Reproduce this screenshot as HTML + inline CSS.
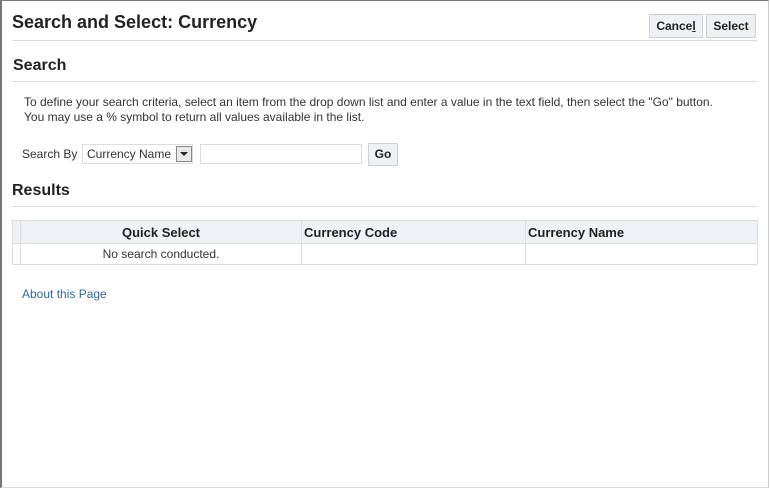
<!DOCTYPE html>
<html><head><style>
body{margin:0;width:770px;height:489px;position:relative;overflow:hidden;background:#fff;font-family:"Liberation Sans",Arial,sans-serif;color:#222}
.a{position:absolute}
.frame{left:0;top:0;width:766px;height:486px;border-top:1px solid #777;border-left:2px solid #777;border-right:1px solid #ccc;border-bottom:1px solid #ddd}
.hr{height:1px;background:#ddd;left:12px;width:746px}
.btn{top:14px;height:22px;background:#eef0f3;border:1px solid #ccd0d5;font-size:12px;font-weight:bold;line-height:22px;text-align:center;color:#222}
.t{font-size:12px;color:#333}
table{border-collapse:collapse;font-size:13px;table-layout:fixed}
td,th{border:1px solid #ddd;padding:0}
</style></head><body>
<div class="a frame"></div>
<div class="a" style="left:12px;top:12px;font-size:18px;font-weight:bold;color:#222">Search and Select: Currency</div>
<div class="a btn" style="left:649px;width:52px">Cance<u>l</u></div>
<div class="a btn" style="left:706px;width:48px">Select</div>
<div class="a hr" style="top:40px"></div>
<div class="a" style="left:13px;top:57px;font-size:16px;font-weight:bold">Search</div>
<div class="a hr" style="top:81px"></div>
<div class="a t" style="left:24px;top:95px;line-height:15px">To define your search criteria, select an item from the drop down list and enter a value in the text field, then select the "Go" button.<br>You may use a % symbol to return all values available in the list.</div>
<div class="a t" style="left:22px;top:147px">Search By</div>
<div class="a" style="left:82px;top:144px;width:109px;height:18px;border:1px solid #ddd;font-size:12px;line-height:18px;color:#333"><span style="padding-left:4px">Currency Name</span>
<div class="a" style="left:93px;top:1px;width:14px;height:14px;border:1px solid #888;background:#e8e8e8"><div class="a" style="left:3px;top:5px;width:0;height:0;border-left:4px solid transparent;border-right:4px solid transparent;border-top:4px solid #222"></div></div></div>
<div class="a" style="left:200px;top:144px;width:160px;height:18px;border:1px solid #ddd"></div>
<div class="a" style="left:368px;top:143px;width:28px;height:21px;background:#eef0f3;border:1px solid #ccd0d5;font-size:12px;font-weight:bold;line-height:21px;text-align:center">Go</div>
<div class="a" style="left:12px;top:182px;font-size:16px;font-weight:bold">Results</div>
<div class="a hr" style="top:206px"></div>
<table class="a" style="left:12px;top:220px;width:746px">
<colgroup><col style="width:8px"><col style="width:281px"><col style="width:224px"><col></colgroup>
<tr style="height:23px;background:#eef1f5"><th></th><th style="text-align:center">Quick Select</th><th style="text-align:left;padding-left:2px">Currency Code</th><th style="text-align:left;padding-left:2px">Currency Name</th></tr>
<tr style="height:21px"><td></td><td style="text-align:center;font-size:12px;color:#333">No search conducted.</td><td></td><td></td></tr>
</table>
<div class="a" style="left:22px;top:287px;font-size:12px;color:#336699">About this Page</div>
</body></html>
